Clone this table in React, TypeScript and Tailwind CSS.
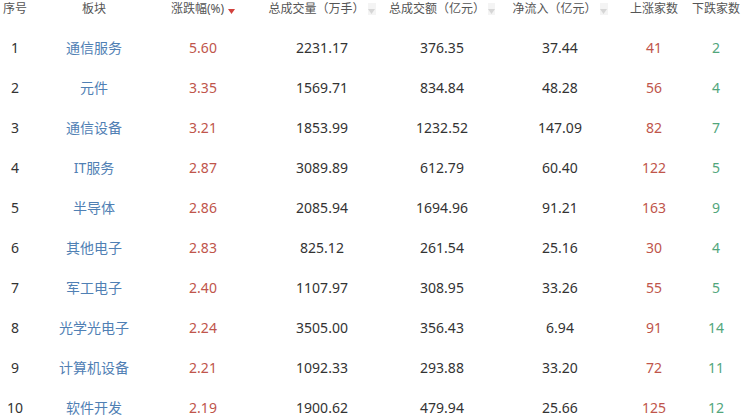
import type { ReactNode } from "react";

type Row = {
  no: number;
  name: string;
  change: string;
  volume: string;
  amount: string;
  inflow: string;
  up: number;
  down: number;
};

const rows: Row[] = [
  { no: 1, name: "通信服务", change: "5.60", volume: "2231.17", amount: "376.35", inflow: "37.44", up: 41, down: 2 },
  { no: 2, name: "元件", change: "3.35", volume: "1569.71", amount: "834.84", inflow: "48.28", up: 56, down: 4 },
  { no: 3, name: "通信设备", change: "3.21", volume: "1853.99", amount: "1232.52", inflow: "147.09", up: 82, down: 7 },
  { no: 4, name: "IT服务", change: "2.87", volume: "3089.89", amount: "612.79", inflow: "60.40", up: 122, down: 5 },
  { no: 5, name: "半导体", change: "2.86", volume: "2085.94", amount: "1694.96", inflow: "91.21", up: 163, down: 9 },
  { no: 6, name: "其他电子", change: "2.83", volume: "825.12", amount: "261.54", inflow: "25.16", up: 30, down: 4 },
  { no: 7, name: "军工电子", change: "2.40", volume: "1107.97", amount: "308.95", inflow: "33.26", up: 55, down: 5 },
  { no: 8, name: "光学光电子", change: "2.24", volume: "3505.00", amount: "356.43", inflow: "6.94", up: 91, down: 14 },
  { no: 9, name: "计算机设备", change: "2.21", volume: "1092.33", amount: "293.88", inflow: "33.20", up: 72, down: 11 },
  { no: 10, name: "软件开发", change: "2.19", volume: "1900.62", amount: "479.94", inflow: "25.66", up: 125, down: 12 },
];

const grid = "grid grid-cols-[30px_128px_90px_148px_92px_144px_44px_80px]";

const SortIcon = ({ active }: { active?: boolean }) => (
  <span
    className={`ml-[3px] inline-flex h-[12px] w-[8px] items-end justify-center pb-[1px] ${
      active ? "" : "bg-[#f4f4f4]"
    }`}
  >
    <svg width="7" height="5" viewBox="0 0 7 5">
      <path d="M0 0 L7 0 L3.5 5 Z" fill={active ? "#d2413c" : "#d6d6d6"} />
    </svg>
  </span>
);

const Cell = ({ children, className = "" }: { children: ReactNode; className?: string }) => (
  <div className={`flex items-center justify-center whitespace-nowrap ${className}`}>{children}</div>
);

export default function App() {
  return (
    <div
      className="w-[744px] h-[417px] overflow-hidden bg-white"
      style={{ fontFamily: '"Noto Sans", "Noto Sans CJK SC", sans-serif' }}
    >
      <div className="w-[756px]">
        <div className={`${grid} h-[18px] text-[12px] text-[#555]`}>
          <Cell>序号</Cell>
          <Cell>板块</Cell>
          <Cell>
            涨跌幅(%)
            <SortIcon active />
          </Cell>
          <Cell>
            总成交量（万手）
            <SortIcon />
          </Cell>
          <Cell>
            总成交额（亿元）
            <SortIcon />
          </Cell>
          <Cell>
            净流入（亿元）
            <SortIcon />
          </Cell>
          <Cell>上涨家数</Cell>
          <Cell>下跌家数</Cell>
        </div>
        <div className="mt-[9px]">
          {rows.map((r) => (
            <div key={r.no} className={`${grid} h-[40px] text-[14px] text-[#333]`}>
              <Cell>{r.no}</Cell>
              <Cell className="text-[#5080b4]">{r.name}</Cell>
              <Cell className="text-[#c0554b]">{r.change}</Cell>
              <Cell>{r.volume}</Cell>
              <Cell>{r.amount}</Cell>
              <Cell>{r.inflow}</Cell>
              <Cell className="text-[#c0554b]">{r.up}</Cell>
              <Cell className="text-[#52a67c]">{r.down}</Cell>
            </div>
          ))}
        </div>
      </div>
    </div>
  );
}
